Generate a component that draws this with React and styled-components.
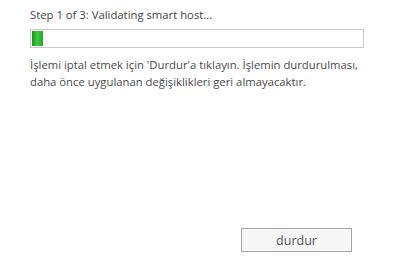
import React from "react";
import styled, { createGlobalStyle } from "styled-components";

const GlobalStyle = createGlobalStyle`
	html, body {
		margin: 0;
		padding: 0;
		background: #ffffff;
	}
	body {
		font-family: "Open Sans", "Noto Sans", sans-serif;
	}
`;

const WizardPage = styled.div`
	width: 394px;
	height: 272px;
	box-sizing: border-box;
	padding: 7px 30px 0 30px;
	display: flex;
	flex-direction: column;
	color: #444444;
`;

const StepLabel = styled.div`
	font-size: 11.3px;
	line-height: 16px;
	height: 16px;
`;

const ProgressTrack = styled.div`
	margin-top: 6px;
	width: 334px;
	height: 19px;
	box-sizing: border-box;
	border: 1px solid #c9c9c9;
	background: #ffffff;
	padding: 1px;
	display: flex;
`;

const ProgressChunk = styled.div`
	width: ${(p) => p.width}px;
	height: 100%;
	background: linear-gradient(
		to right,
		#1f8f1f 0%,
		#3ccc3c 45%,
		#2aa52a 100%
	);
`;

const Message = styled.p`
	margin: 8px 0 0 0;
	font-size: 11.3px;
	line-height: 17px;
	color: #4a4a4a;
`;

const Footer = styled.div`
	margin-top: auto;
	padding: 0 12px 20px 0;
	display: flex;
	justify-content: flex-end;
`;

const StopButton = styled.button`
	width: 111px;
	height: 24px;
	box-sizing: border-box;
	border: 1px solid #a5a5a5;
	background: #f6f6f6;
	color: #555555;
	font-family: "Open Sans", "Noto Sans", sans-serif;
	font-size: 12.5px;
	padding: 0;
	cursor: pointer;
`;

const App = () => {
	return (
		<>
			<GlobalStyle />
			<WizardPage>
				<StepLabel>Step 1 of 3: Validating smart host...</StepLabel>
				<ProgressTrack>
					<ProgressChunk width={11} />
				</ProgressTrack>
				<Message>
					İşlemi iptal etmek için 'Durdur'a tıklayın. İşlemin durdurulması,
					<br />
					daha önce uygulanan değişiklikleri geri almayacaktır.
				</Message>
				<Footer>
					<StopButton>durdur</StopButton>
				</Footer>
			</WizardPage>
		</>
	);
};

export default App;
